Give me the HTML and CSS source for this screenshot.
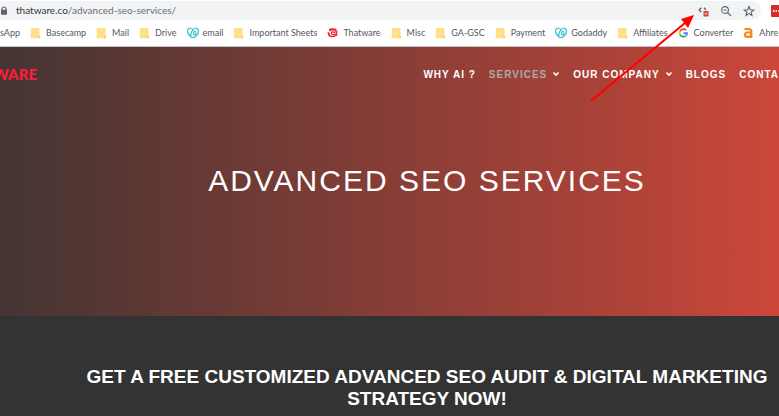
FILE: index.html
```
<!DOCTYPE html>
<html lang="en">
<head>
  <meta charset="UTF-8" />
  <meta name="viewport" content="width=device-width, initial-scale=1.0" />
  <title>Advanced SEO Services</title>
  <link rel="stylesheet" href="styles.css">
</head>
<body>

  <!-- Shared icons -->
  <svg class="sprite" aria-hidden="true">
    <symbol id="folder" viewBox="0 0 12 12">
      <path d="M1.500 1h7.200a.8.8 0 0 1 .8.8V9.400l.6.4v.8a.6.6 0 0 1-.6.6h-8a.8.8 0 0 1-.8-.8V1.800a.8.8 0 0 1 .8-.8z" fill="#ffe08a" />
      <path d="M8 8.700h1.500l.6.9v1a.6.6 0 0 1-.6.6H8z" fill="#f9cf5c" />
    </symbol>
    <symbol id="godaddy" viewBox="0 0 12 12">
      <g fill="none" stroke="#3cc3cd" stroke-width="1.200">
        <path d="M6 2.800C4.400.8 1.600.6.8 2.800c-.7 2.100.6 4.800 2.400 6.400 1 .9 1.800 1.400 2.800 1.400s1.800-.5 2.800-1.400c1.800-1.600 3.100-4.300 2.400-6.400C10.400.6 7.600.8 6 2.800z" />
        <path d="M6 2.800c-1.300 1.400-2.600 3.600-2.200 6.200M8.900 4.600C8 3.800 6.800 4.400 6.500 6c-.3 1.700 1.200 2.800 2.400 1.500V6H7.700" />
      </g>
    </symbol>
    <symbol id="chevron" viewBox="0 0 8 8">
      <path d="M1.500 2.500L4 5l2.500-2.500" fill="none" stroke="#fff" stroke-width="1.600" />
    </symbol>
  </svg>

  <div class="toolbar">
    <div class="omnibox">
      <svg class="lock" viewBox="0 0 8 10">
        <path d="M2 4V3a2 2 0 0 1 4 0v1" fill="none" stroke="#5f6368" stroke-width="1.200" />
        <rect x="1" y="3.800" width="6" height="5" rx=".7" fill="#5f6368" />
      </svg>
      <div class="url">thatware.co<span>/advanced-seo-services/</span></div>
      <button class="tool" aria-label="Blocked scripts">
        <svg viewBox="0 0 12 12" fill="none">
          <path d="M4.300 2.800L2.200 5l2.100 2.200M7 2.800l1.800 1.900" stroke="#5f6368" stroke-width="1.300" />
          <rect x="6.500" y="6" width="5" height="5.500" rx=".6" fill="#dc3e37" />
          <path d="M8 7.700l2 2M10 7.700l-2 2" stroke="#fff" stroke-width=".7" />
        </svg>
      </button>
      <button class="tool" aria-label="Zoom">
        <svg viewBox="0 0 12 12" fill="none" stroke="#5f6368" stroke-width="1.100">
          <circle cx="5" cy="5" r="3.400" />
          <path d="M7.500 7.500L11 11M3.500 5h3" />
        </svg>
      </button>
      <button class="tool" aria-label="Bookmark this page">
        <svg viewBox="0 0 12 12" fill="none" stroke="#5f6368" stroke-width="1.100">
          <path d="M6 1.500l1.300 3.200 3.500.2-2.700 2.200.9 3.400-3-1.900-3 1.900.9-3.400L1.200 4.900l3.500-.2z" />
        </svg>
      </button>
    </div>
    <button class="extension" aria-label="LastPass">
      <svg viewBox="0 0 12 12">
        <rect width="12" height="12" rx="1" fill="#d32d27" />
        <g fill="#fff"><circle cx="2.700" cy="6" r=".9" /><circle cx="5.300" cy="6" r=".9" /><circle cx="7.900" cy="6" r=".9" /></g>
      </svg>
    </button>
  </div>

  <div class="bookmarks">
    <a href="#">sApp</a>
    <a href="#"><svg><use href="#folder" /></svg>Basecamp</a>
    <a href="#"><svg><use href="#folder" /></svg>Mail</a>
    <a href="#"><svg><use href="#folder" /></svg>Drive</a>
    <a href="#"><svg><use href="#godaddy" /></svg>email</a>
    <a href="#"><svg><use href="#folder" /></svg>Important Sheets</a>
    <a href="#">
      <svg viewBox="0 0 12 12" fill="none" stroke="#ec2436" stroke-width="1.300">
        <path d="M2 2.500L5 2l4.500.3M2.500 4.300C3.500 2.500 8 2.300 9 4.500c1 2.300-.3 5-3 5.200-2.600.2-4.300-1.600-4-3.700" />
        <path d="M7.700 6.200c0-1.800-3.400-1.900-3.400 0 0 1.600 2.400 2 3.400.8M1 5l1.500 4.500M9.800 3.500L9.500 9" />
      </svg>Thatware
    </a>
    <a href="#"><svg><use href="#folder" /></svg>Misc</a>
    <a href="#"><svg><use href="#folder" /></svg>GA-GSC</a>
    <a href="#"><svg><use href="#folder" /></svg>Payment</a>
    <a href="#"><svg><use href="#godaddy" /></svg>Godaddy</a>
    <a href="#"><svg><use href="#folder" /></svg>Affiliates</a>
    <a href="#">
      <svg viewBox="0 0 12 12" fill="none" stroke-width="1.700">
        <path d="M8.100 3.200A3.700 3.700 0 0 0 2 4.400" stroke="#ea4335" />
        <path d="M2 4.400a3.700 3.700 0 0 0 0 3.200" stroke="#fbbc05" />
        <path d="M2 7.600a3.700 3.700 0 0 0 5.700 1.200" stroke="#34a853" />
        <path d="M7.700 8.800A3.700 3.700 0 0 0 9.100 6.200H5.400" stroke="#4285f4" />
      </svg>Converter
    </a>
    <a href="#">
      <svg viewBox="0 0 12 12" fill="none" stroke="#f58a1f" stroke-width="2.200">
        <path d="M1.500 2.200h5a1.800 1.800 0 0 1 1.800 1.800v7M8.300 5.500H4.200a2.100 2.100 0 0 0 0 4.300h1.300C7.300 9.800 8.300 8.500 8.300 7" />
      </svg>Ahre
    </a>
  </div>

  <header class="hero">
    <div class="site-bar">
      <a class="logo" href="#">WARE</a>
      <nav>
        <a href="#">WHY AI ?</a>
        <a class="active" href="#">SERVICES<svg><use href="#chevron" /></svg></a>
        <a href="#">OUR COMPANY<svg><use href="#chevron" /></svg></a>
        <a href="#">BLOGS</a>
        <a href="#">CONTA</a>
      </nav>
    </div>
    <h1>ADVANCED SEO SERVICES</h1>
  </header>

  <section class="audit">
    <h2>GET A FREE CUSTOMIZED ADVANCED SEO AUDIT &amp; DIGITAL MARKETING STRATEGY NOW!</h2>
  </section>

  <!-- Pointer to the script icon -->
  <svg class="arrow" viewBox="0 0 106 90" aria-hidden="true">
    <path d="M2 87L96 9" stroke="#f00" stroke-width="2" />
    <path d="M105 1L99 14l-7-9z" fill="#f00" />
  </svg>

</body>
</html>
```
FILE: styles.css
```
body {
  position: relative;
  margin: 0;
  min-height: 100vh;
  display: flex;
  flex-direction: column;
  overflow: hidden;
  background: #333;
  font-family: "Liberation Sans", Arial, sans-serif;
}

a {
  color: inherit;
  text-decoration: none;
}

button {
  border: none;
  padding: 0;
  background: none;
  cursor: pointer;
}

svg {
  display: block;
  flex: none;
}

.sprite {
  position: absolute;
  width: 0;
  height: 0;
}

/* Browser bars */
.toolbar {
  display: flex;
  align-items: center;
  gap: 10px;
  padding-top: 1px;
  background: #fff;
  overflow: hidden;
}

.omnibox {
  flex: 1;
  display: flex;
  align-items: center;
  gap: 11px;
  height: 19px;
  padding-right: 6px;
  border-radius: 0 10px 10px 0;
  background: #f1f3f4;
}

.lock {
  width: 8px;
  height: 10px;
}

.url {
  flex: 1;
  margin-left: -3px;
  font: 10px/19px Lato, sans-serif;
  color: #303338;
}

.url span {
  color: #6b6f74;
}

.tool svg,
.extension svg {
  width: 12px;
  height: 12px;
}

.extension {
  width: 8px;
  overflow: hidden;
}

.bookmarks {
  display: flex;
  align-items: center;
  gap: 10px;
  height: 26px;
  border-bottom: 1px solid #c4c4c4;
  background: #fff;
  overflow: hidden;
  font: 9px/26px Lato, sans-serif;
  color: #55585c;
}

.bookmarks a {
  display: flex;
  align-items: center;
  gap: 4px;
  white-space: nowrap;
}

.bookmarks svg {
  width: 12px;
  height: 12px;
}

/* Page header */
.hero {
  height: 269px;
  background: linear-gradient(to right, #453534, #663934 26%, #8a3e37 52%, #aa4238 77%, #cc473a);
  color: #fff;
}

.site-bar {
  display: flex;
  align-items: center;
  justify-content: space-between;
  height: 54px;
  overflow: hidden;
}

.logo {
  display: flex;
  justify-content: flex-end;
  width: 37px;
  overflow: hidden;
  font: 900 15px/20px Lato, sans-serif;
  color: #ff1c38;
}

nav {
  display: flex;
  gap: 13px;
  font-size: 10px;
  font-weight: bold;
  letter-spacing: 1px;
  white-space: nowrap;
}

nav a {
  display: flex;
  align-items: center;
  gap: 5px;
}

nav svg {
  width: 8px;
  height: 8px;
}

nav .active {
  color: #aaa;
}

h1 {
  margin: 62px 0 0 75px;
  text-align: center;
  font-size: 30px;
  line-height: 36px;
  font-weight: normal;
  letter-spacing: 2px;
}

.audit {
  flex: 1;
  padding: 50px 0 6px 75px;
  color: #fff;
}

h2 {
  margin: 0;
  text-align: center;
  font-size: 19px;
  line-height: 22px;
}

.arrow {
  position: absolute;
  top: 14px;
  left: 589px;
  width: 106px;
  height: 90px;
}
```
